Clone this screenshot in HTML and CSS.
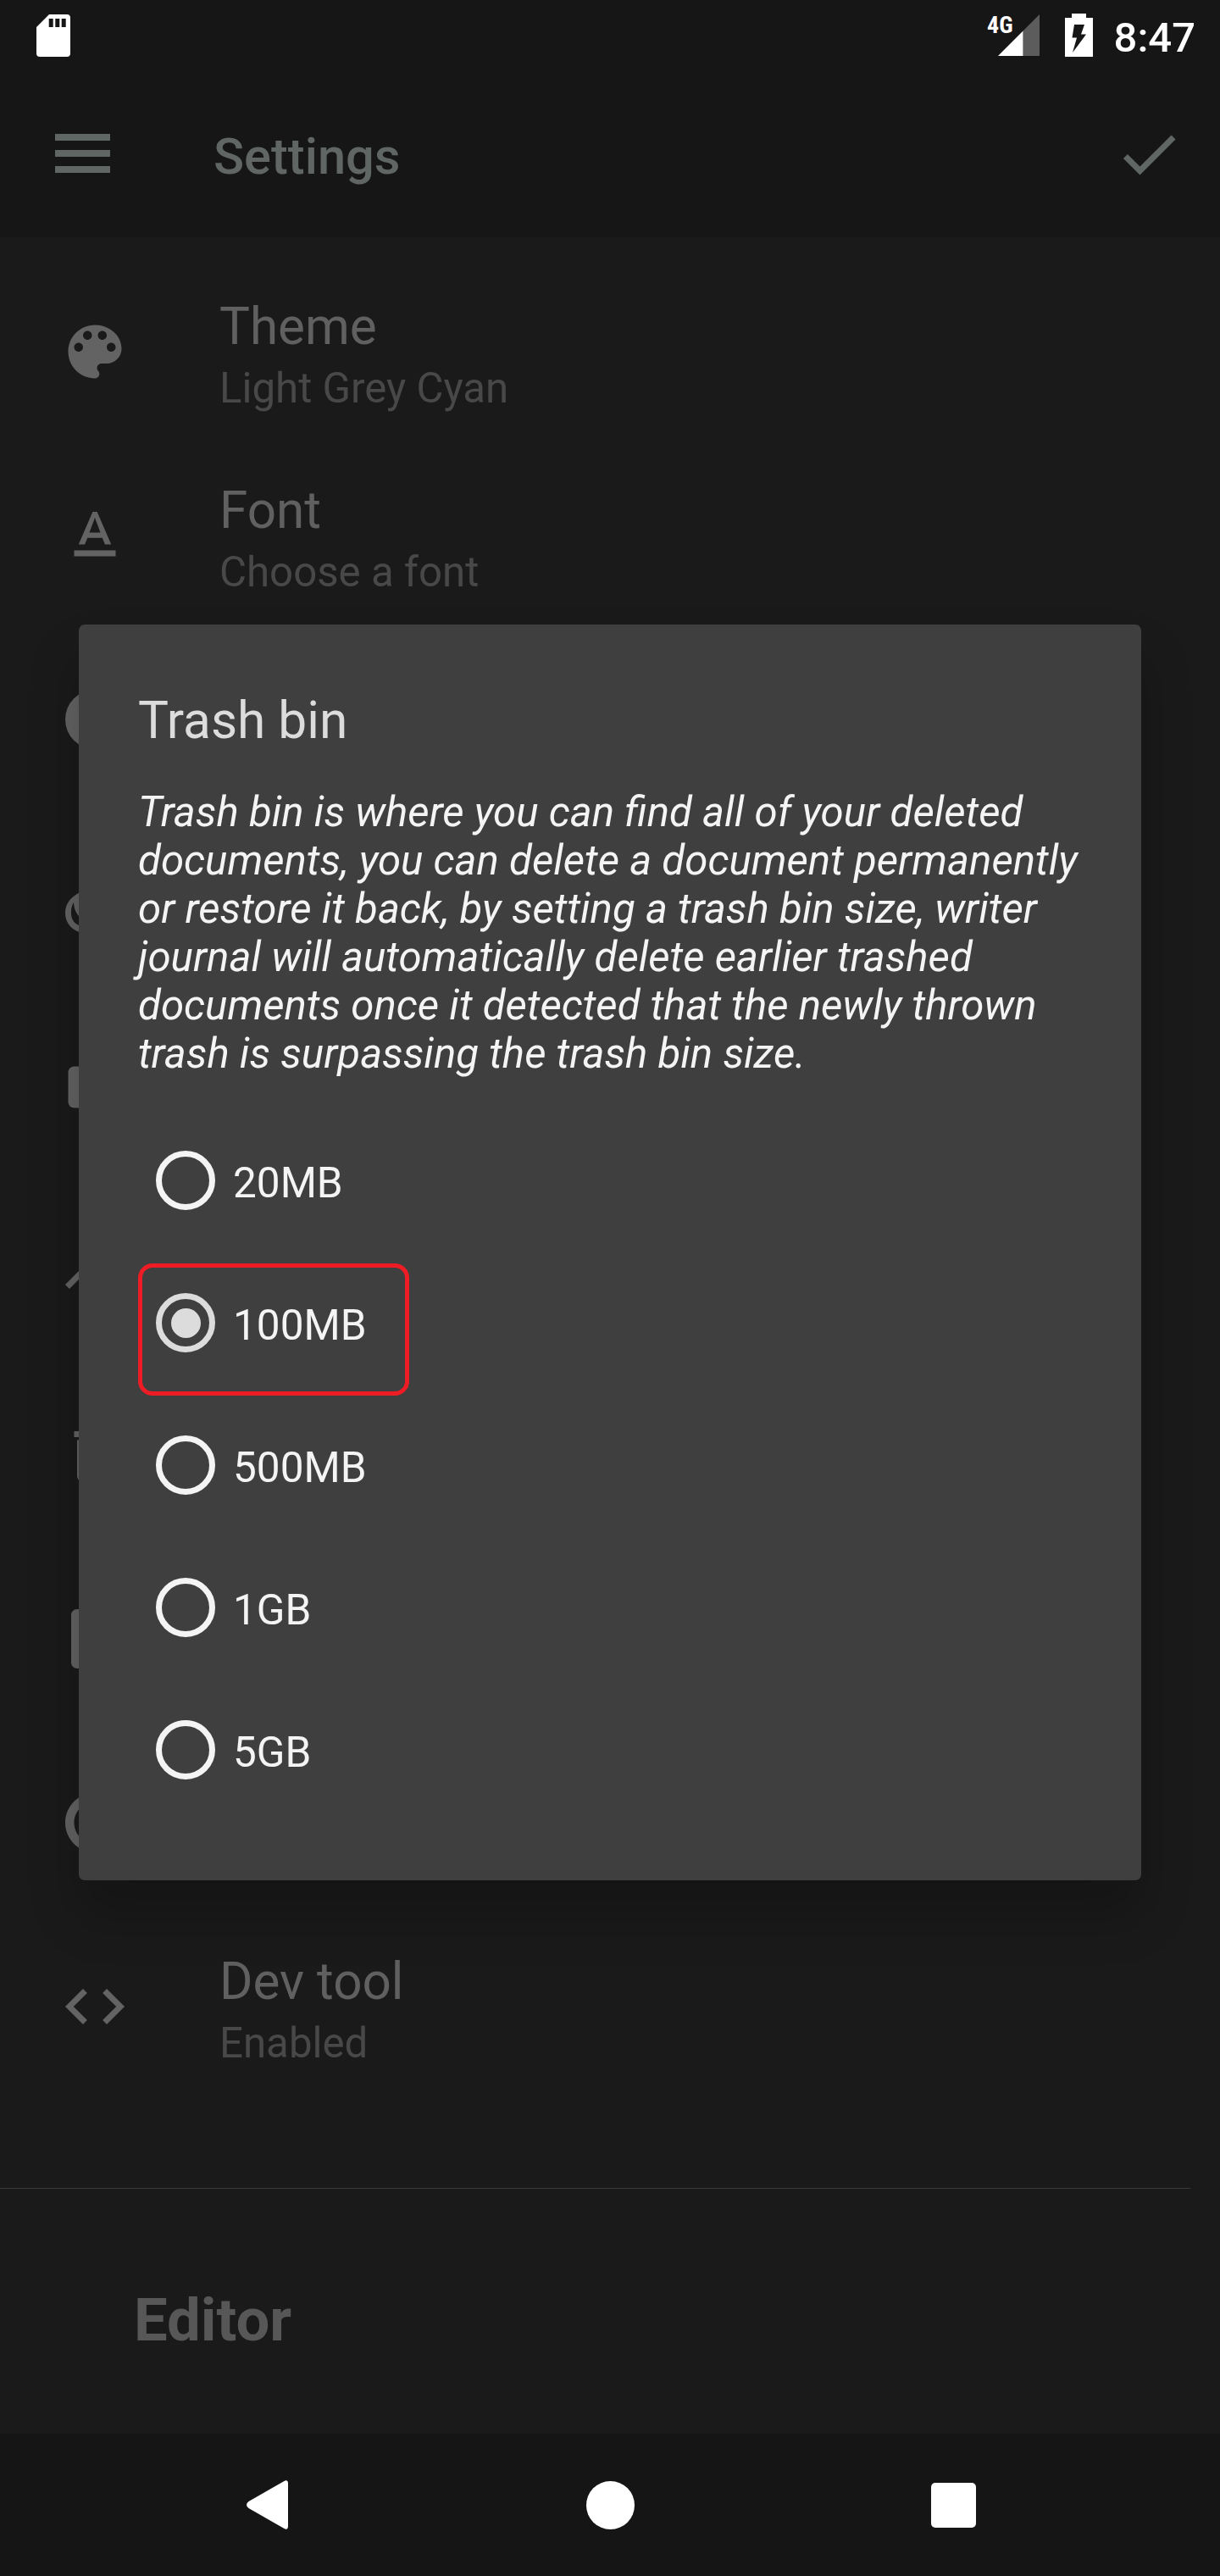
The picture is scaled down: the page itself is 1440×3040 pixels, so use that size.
FILE: index.html
```
<!DOCTYPE html>
<html lang="en">
<head>
<meta charset="utf-8">
<title>Settings</title>
<link rel="stylesheet" href="styles.css">
</head>
<body>
<div class="screen">
  <header class="top">
    <div class="status">
      <svg class="sd" width="40" height="50" viewBox="0 0 40 50"><path fill="#fff" fill-rule="evenodd" d="M15 0H36a4 4 0 0 1 4 4V46a4 4 0 0 1-4 4H4a4 4 0 0 1-4-4V15ZM14.700 5v10h5V5ZM22.300 5v10h5V5ZM29.700 5v10h5V5Z"/></svg>
      <span class="net">4G</span>
      <svg class="signal" width="49" height="49" viewBox="0 0 49 49"><path fill="#5c5c5c" d="M29.500 19.500 49 0V49H29.500Z"/><path fill="#fff" d="M0 49 29.500 19.500V49Z"/></svg>
      <svg class="battery" width="33" height="51" viewBox="0 0 33 51"><path fill="#fff" d="M8 0H25V5H33V51H0V5H8Z"/><path fill="#161616" d="M11 13H23L19 24.500H25L9 46 14 28.500H8.500Z"/></svg>
      <span class="clock">8:47</span>
    </div>
    <div class="appbar">
      <svg class="menu" width="65" height="46" viewBox="0 0 65 46"><path fill="#5f6664" d="M0 0H65V8H0ZM0 19H65V27H0ZM0 38H65V46H0Z"/></svg>
      <h1 class="page-title">Settings</h1>
      <svg class="check" width="84" height="84" viewBox="0 0 24 24"><path fill="#5f6664" d="M9 16.170 4.830 12l-1.420 1.410L9 19 21 7l-1.410-1.410z"/></svg>
    </div>
  </header>

  <main class="list">
    <div class="item">
      <svg class="icon" viewBox="0 0 24 24"><path d="M12 3c-4.970 0-9 4.030-9 9s4.030 9 9 9c.83 0 1.500-.67 1.500-1.500 0-.39-.15-.74-.39-1.010-.23-.26-.38-.61-.38-.99 0-.83.67-1.500 1.500-1.500H16c2.760 0 5-2.240 5-5 0-4.420-4.030-8-9-8zm-5.500 9c-.83 0-1.500-.67-1.500-1.500S5.670 9 6.500 9 8 9.670 8 10.500 7.330 12 6.500 12zm3-4C8.670 8 8 7.330 8 6.500S8.670 5 9.500 5s1.500.67 1.500 1.500S10.330 8 9.500 8zm5 0c-.83 0-1.500-.67-1.500-1.500S13.670 5 14.500 5s1.500.67 1.500 1.500S15.330 8 14.500 8zm3 4c-.83 0-1.500-.67-1.500-1.500S16.670 9 17.500 9s1.500.67 1.500 1.500-.67 1.500-1.500 1.500z"/></svg>
      <div class="label"><div class="name">Theme</div><div class="value">Light Grey Cyan</div></div>
    </div>
    <div class="item">
      <svg class="icon" viewBox="0 0 24 24"><path d="M5 17v2h14v-2H5zm4.500-4.200h5l.9 2.200h2.100L12.750 4h-1.500L6.500 15h2.100l.9-2.200zM12 5.980L13.870 11h-3.740L12 5.980z"/></svg>
      <div class="label"><div class="name">Font</div><div class="value">Choose a font</div></div>
    </div>
    <div class="item"><svg class="icon" viewBox="0 0 24 24"><circle cx="12" cy="12" r="10"/></svg></div>
    <div class="item"><svg class="icon" viewBox="0 0 84 84"><path fill-rule="evenodd" d="M28 24C26 28 22 30 18 33 11 38 7 45 7 53.500 7 66 16 75 28 77ZM17 41C14 46 14 50 14 54 14 61 18 67 26 69V60C20 55 17 48 17 41Z"/></svg></div>
    <div class="item"><svg class="icon" viewBox="0 0 24 24"><rect x="3" y="5" width="18" height="14" rx="2"/></svg></div>
    <div class="item"><svg class="icon" viewBox="0 0 24 24"><path d="M16 6l2.290 2.290-4.880 4.880-4-4L2 16.590 3.410 18l6-6 4 4 6.300-6.290L22 12V6z"/></svg></div>
    <div class="item"><svg class="icon" viewBox="0 0 24 24"><path d="M6 19c0 1.100.9 2 2 2h8c1.100 0 2-.9 2-2V7H6v12zM19 4h-3.500l-1-1h-5l-1 1H5v2h14V4z"/></svg></div>
    <div class="item"><svg class="icon" viewBox="0 0 24 24"><path d="M6 2c-1.100 0-2 .9-2 2v16c0 1.100.9 2 2 2h12c1.100 0 2-.9 2-2V8l-6-6H6z"/></svg></div>
    <div class="item"><svg class="icon" viewBox="0 0 24 24"><path d="M11 5.080V2c-5 .5-9 4.810-9 10s4 9.500 9 10v-3.080c-3.390-.49-6-3.390-6-6.920s2.610-6.430 6-6.920z"/></svg></div>
    <div class="item">
      <svg class="icon" viewBox="0 0 24 24"><path d="M9.400 16.600L4.800 12l4.600-4.600L8 6l-6 6 6 6 1.400-1.400zm5.200 0l4.600-4.600-4.600-4.600L16 6l6 6-6 6-1.400-1.400z"/></svg>
      <div class="label"><div class="name">Dev tool</div><div class="value">Enabled</div></div>
    </div>
    <hr class="divider">
    <h2 class="section">Editor</h2>
  </main>

  <nav class="navbar">
    <svg width="51" height="58" viewBox="0 0 51 58"><path fill="#fff" d="M45 1.200Q50 -1.500 50 4V54Q50 59.500 45 56.800L3.500 33Q-1.500 29 3.500 25Z"/></svg>
    <svg width="57" height="57" viewBox="0 0 57 57"><circle cx="28.500" cy="28.500" r="28.500" fill="#fff"/></svg>
    <svg width="53" height="53" viewBox="0 0 53 53"><rect width="53" height="53" rx="5" fill="#fff"/></svg>
  </nav>

  <section class="dialog">
    <h2 class="dialog-title">Trash bin</h2>
    <p class="dialog-text">Trash bin is where you can find all of your deleted documents, you can delete a document permanently or restore it back, by setting a trash bin size, writer journal will automatically delete earlier trashed documents once it detected that the newly thrown trash is surpassing the trash bin size.</p>
    <div class="options">
      <div class="option"><span class="radio"></span><span class="size">20MB</span></div>
      <div class="option selected"><span class="radio"></span><span class="size">100MB</span><span class="highlight"></span></div>
      <div class="option"><span class="radio"></span><span class="size">500MB</span></div>
      <div class="option"><span class="radio"></span><span class="size">1GB</span></div>
      <div class="option"><span class="radio"></span><span class="size">5GB</span></div>
    </div>
  </section>
</div>
</body>
</html>
```
FILE: styles.css
```
* { box-sizing: border-box; }

body {
  margin: 0;
  background: #1a1a1a;
  font-family: Roboto, sans-serif;
}

h1, h2, p { margin: 0; }
svg { display: block; flex: none; }

.screen {
  position: relative;
  display: flex;
  flex-direction: column;
  width: 1440px;
  height: 3040px;
  overflow: hidden;
}

/* Status bar and app bar */
.top {
  flex: none;
  height: 280px;
  background: #161616;
}

.status {
  display: flex;
  align-items: flex-start;
  height: 84px;
  padding: 17px 29px 0 43px;
  color: #fff;
}

.net {
  margin-left: auto;
  font-size: 28px;
  font-weight: 700;
  font-stretch: condensed;
  line-height: 25px;
}

.signal { margin-left: -18px; }
.battery { margin: -1px 0 0 30px; }

.clock {
  margin-left: 25px;
  font-size: 49px;
  font-weight: 500;
  line-height: 55px;
}

.appbar {
  display: flex;
  align-items: center;
  height: 196px;
  padding: 0 42px 0 65px;
}

.menu { margin-top: -3px; }

.page-title {
  margin: 5px auto 0 122px;
  color: #5f6664;
  font-size: 59.6px;
  font-weight: 500;
  line-height: 70px;
}

/* Settings list */
.list {
  flex: 1;
  min-height: 0;
  padding-top: 26px;
}

.item {
  display: flex;
  height: 217px;
  padding-left: 70px;
}

.icon {
  width: 84px;
  height: 84px;
  margin-top: 67px;
  fill: #636363;
}

.label {
  padding: 45px 0 0 105px;
}

.name {
  color: #606060;
  font-size: 60.2px;
  line-height: 70px;
}

.value {
  margin-top: 8px;
  color: #484848;
  font-size: 49.2px;
  line-height: 59px;
}

.divider {
  width: 1405px;
  height: 1px;
  margin: 106px 0 0;
  border: 0;
  background: #3a3a3a;
}

.section {
  margin: 113px 0 0 158px;
  color: #575757;
  font-size: 70.6px;
  font-weight: 700;
  line-height: 84px;
}

/* System navigation */
.navbar {
  display: grid;
  flex: none;
  grid-template-columns: repeat(3, 405px);
  place-content: center;
  place-items: center;
  height: 168px;
  background: #151515;
}

/* Trash bin dialog */
.dialog {
  position: absolute;
  top: 737px;
  left: 93px;
  width: 1254px;
  height: 1482px;
  padding: 79px 70px 70px;
  border-radius: 7px;
  background: #3f3f3f;
  box-shadow: 0 40px 60px rgba(0, 0, 0, 0.22);
}

.dialog-title {
  color: #dcdcdc;
  font-size: 60.4px;
  font-weight: 400;
  line-height: 70px;
}

.dialog-text {
  margin-top: 44px;
  color: #f4f4f4;
  font-size: 49.2px;
  font-style: italic;
  line-height: 57px;
  word-spacing: 0.1px;
}

.options { margin-top: 37px; }

.option {
  position: relative;
  display: flex;
  align-items: center;
  gap: 21px;
  height: 168px;
  padding-left: 21px;
  color: #f4f4f4;
}

.radio {
  display: grid;
  place-items: center;
  width: 70px;
  height: 70px;
  border: 7px solid #f4f4f4;
  border-radius: 50%;
}

.selected .radio { border-color: #dcdcdc; }

.selected .radio::after {
  width: 35px;
  height: 35px;
  border-radius: 50%;
  background: #dcdcdc;
  content: "";
}

.size {
  padding-top: 5px;
  font-size: 49.5px;
  line-height: 58px;
}

.highlight {
  position: absolute;
  top: 14px;
  left: 0;
  width: 320px;
  height: 156px;
  border: 5px solid #ee1c24;
  border-radius: 17px;
}
```
